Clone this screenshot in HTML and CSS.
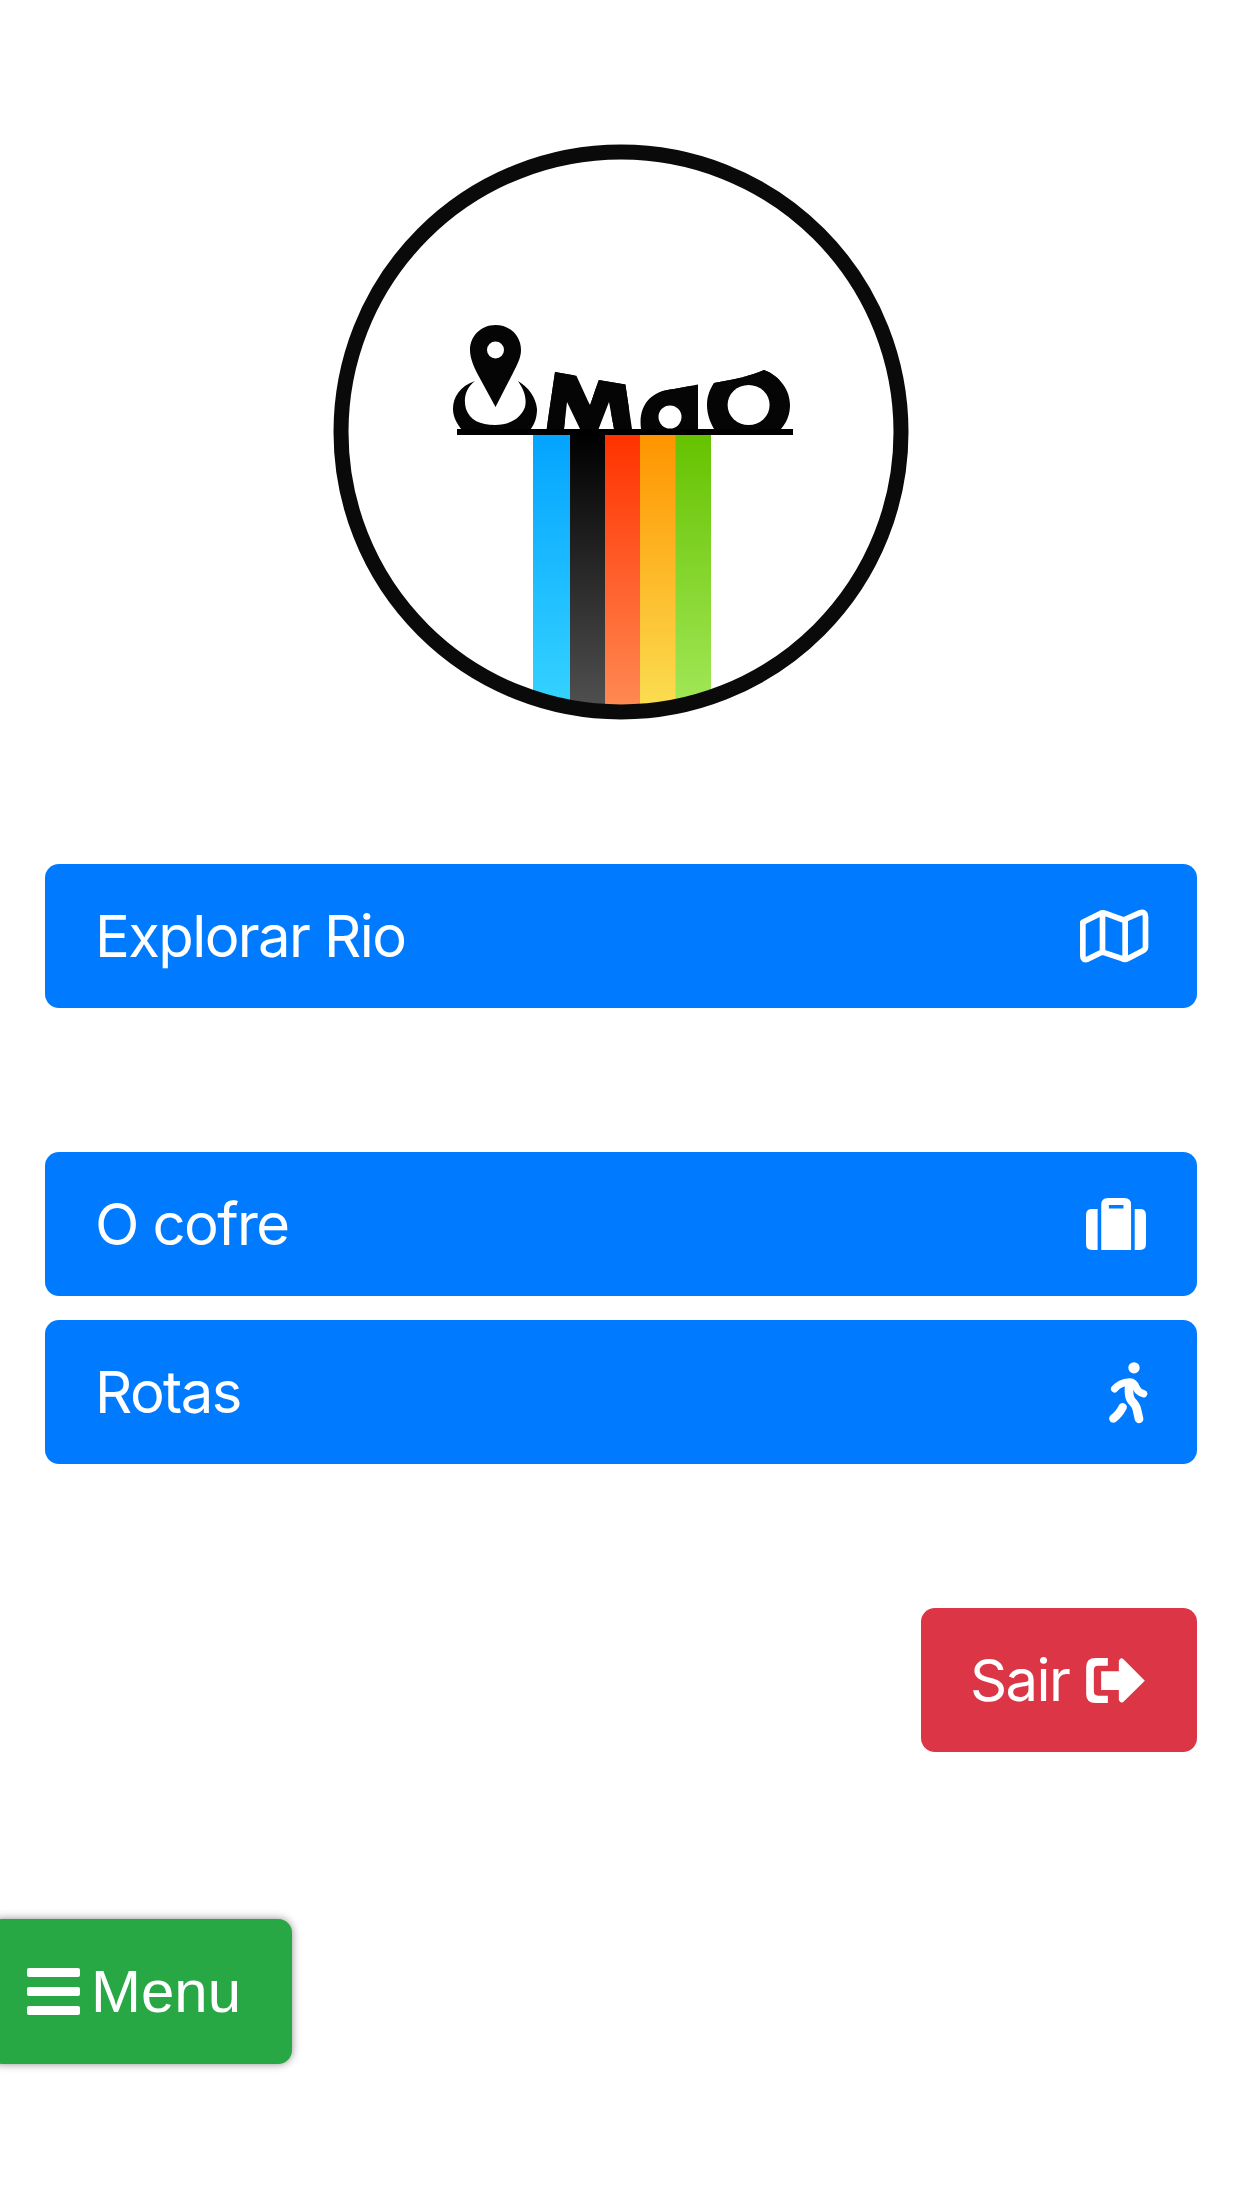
FILE: index.html
```html
<!DOCTYPE html>
<html lang="pt">
<head>
<meta charset="utf-8">
<title>MaO</title>
<link rel="stylesheet" href="styles.css">
</head>
<body>
<main class="page">
  <div class="logo-wrap">
    <svg class="logo" viewBox="321 130 600 600" aria-label="MaO">
      <defs>
        <clipPath id="inner"><circle cx="621" cy="432" r="274"/></clipPath>
        <clipPath id="clipM"><path d="M546.6 429 L555 372 L576.4 375.7 L590 405.5 L598.6 380 L625.4 384.5 L632 429 H614 L609 402 L598.6 429 H580 L567 402 L564 429Z"/></clipPath>
        <clipPath id="clipA"><path d="M641 429 C638 406 650 391 674 389 L698 384.5 V429Z"/></clipPath>
        <clipPath id="clipO"><path d="M714 383 C732 380 750 376 764 370 C780 376 790 390 790 405 C790 414 787 422 781 429 H714 C710 422 707 414 707 405 C707 396 710 389 714 383Z"/></clipPath>
        <linearGradient id="g1" x1="0" y1="0" x2="0" y2="1"><stop offset="0" stop-color="#04a4ff"/><stop offset="1" stop-color="#38d6ff"/></linearGradient>
        <linearGradient id="g2" x1="0" y1="0" x2="0" y2="1"><stop offset="0" stop-color="#000"/><stop offset="1" stop-color="#555"/></linearGradient>
        <linearGradient id="g3" x1="0" y1="0" x2="0" y2="1"><stop offset="0" stop-color="#ff3200"/><stop offset="1" stop-color="#ff8f58"/></linearGradient>
        <linearGradient id="g4" x1="0" y1="0" x2="0" y2="1"><stop offset="0" stop-color="#ff9400"/><stop offset="1" stop-color="#fbe256"/></linearGradient>
        <linearGradient id="g5" x1="0" y1="0" x2="0" y2="1"><stop offset="0" stop-color="#66c200"/><stop offset="1" stop-color="#a6ea5e"/></linearGradient>
      </defs>
      <g clip-path="url(#inner)">
        <rect x="533" y="435" width="37.5" height="290" fill="url(#g1)"/>
        <rect x="570" y="435" width="35.5" height="290" fill="url(#g2)"/>
        <rect x="605" y="435" width="35.5" height="290" fill="url(#g3)"/>
        <rect x="640" y="435" width="36" height="290" fill="url(#g4)"/>
        <rect x="675.5" y="435" width="35.5" height="290" fill="url(#g5)"/>
      </g>
      <circle cx="621" cy="432" r="280" fill="none" stroke="#0a0a0a" stroke-width="15"/>
      <path class="ink" d="M495.5 325 C481 325 470 336 470 350 C470 358 474 367 477 373 L495.5 407 L513 373 C517 365 521 358 521 350 C521 336 510 325 495.5 325Z M495.5 341.5 A8.5 8.5 0 1 1 495.5 358.5 A8.5 8.5 0 1 1 495.5 341.5Z" fill-rule="evenodd"/>
      <path class="ink" d="M475 381 C460 386 453 397 453 409 C453 417 457 424 462 430 H530 C535 424 537 417 537 409 C536 397 528 387 518 381 C524 390 527 398 525 407 C521 418 510 425 495 425 C480 425 470 420 466 409 C463 398 466 388 475 381Z"/>
      <g clip-path="url(#clipM)"><text class="logo-letter" transform="translate(538 432) scale(1.4 1.2)">M</text></g>
      <g clip-path="url(#clipA)"><text class="logo-letter" transform="translate(640 432) scale(1.35 1.2)">a</text></g>
      <circle cx="670" cy="417" r="11.5" fill="#fff"/>
      <g clip-path="url(#clipO)"><text class="logo-letter" transform="translate(706 432) scale(1.35 1.25)">O</text></g>
      <ellipse cx="748.6" cy="405" rx="21" ry="20" fill="#fff"/>
      <rect x="457" y="429" width="336" height="6" fill="#000"/>
    </svg>
  </div>

  <nav class="actions">
    <a class="btn btn-primary btn-split" href="#">
      <span>Explorar Rio</span>
      <svg class="icon icon-map" viewBox="120 85 206 162"><path d="M128 125 L178 100 Q187 95 196 98 L250 118 L300 96 Q316 92 316 108 V198 Q316 206 308 210 L262 234 Q254 238 246 234 L192 216 Q186 214 180 217 L142 236 Q128 240 128 226 Z M187 98 V216 M255 118 V236" fill="none" stroke="#fff" stroke-width="17" stroke-linejoin="round"/></svg>
    </a>
    <div class="spacer"></div>
    <a class="btn btn-primary btn-split" href="#">
      <span>O cofre</span>
      <svg class="icon icon-case" viewBox="137 84 181 157"><path fill="#fff" fill-rule="evenodd" d="M155 117 H172 V241 H155 Q137 241 137 223 V135 Q137 117 155 117Z M284 117 H300 Q318 117 318 135 V223 Q318 241 300 241 H284Z M203 84 H253 Q273 84 273 104 V241 H183 V104 Q183 84 203 84Z M206 105 V116 H250 V105Z"/></svg>
    </a>
    <a class="btn btn-primary btn-split btn-gap" href="#">
      <span>Rotas</span>
      <svg class="icon icon-walk" viewBox="85 62 120 188"><circle cx="163" cy="82" r="17" fill="#fff"/><path d="M105 145 Q120 126 150 124 Q164 124 170 142 Q175 155 192 160" fill="none" stroke="#fff" stroke-width="22" stroke-linecap="round" stroke-linejoin="round"/><path d="M150 128 Q144 165 155 180 Q170 195 172 208 L178 235" fill="none" stroke="#fff" stroke-width="26" stroke-linecap="round" stroke-linejoin="round"/><path d="M101 234 Q118 222 129 200" fill="none" stroke="#fff" stroke-width="25" stroke-linecap="round"/></svg>
    </a>
    <div class="spacer"></div>
    <div class="end">
      <a class="btn btn-danger" href="#">
        <span>Sair</span>
        <svg class="icon icon-exit" viewBox="530 172 176 135"><path fill="#fff" d="M595 172 H558 Q530 172 530 200 V280 Q530 307 558 307 H595 V285 H566 Q553 285 553 272 V208 Q553 195 566 195 H595Z M575 212 H628 V180 Q634 168 642 176 L706 240 L642 303 Q634 310 628 298 V268 H575Z"/></svg>
      </a>
    </div>
  </nav>
</main>

<a class="menu-btn" href="#">
  <span class="bars"><i></i><i></i><i></i></span>
  <span>Menu</span>
</a>
</body>
</html>
```

FILE: styles.css
```css
* { box-sizing: border-box; }
html, body { margin: 0; padding: 0; background: #fff; }
body { width: 1242px; height: 2208px; overflow: hidden; font-family: Inter, "Liberation Sans", sans-serif; position: relative; }
.page { padding: 130px 45px 0; }
.logo-wrap { display: flex; justify-content: center; height: 734px; }
.logo { width: 600px; height: 600px; display: block; }
.ink { fill: #050505; }
.logo-letter { font-family: "DejaVu Sans", sans-serif; font-weight: 700; font-size: 72px; fill: #050505; stroke: #050505; stroke-width: 22px; }
.actions { display: flex; flex-direction: column; }
.btn { display: flex; align-items: center; height: 144px; padding: 0 48px 0 47px; border: 3px solid transparent; border-radius: 14px; color: #fff; text-decoration: none; font-size: 58px; line-height: 90px; letter-spacing: -1.6px; }
.btn-primary { background: #007bff; }
.btn-danger { background: #dc3545; width: 276px; gap: 17px; padding-left: 46px; }
.btn-split { justify-content: space-between; }
.btn-gap { margin-top: 24px; }
.spacer { height: 144px; }
.end { display: flex; justify-content: flex-end; }
.icon { display: block; flex: none; }
.icon-map { width: 69px; height: 54px; margin-right: -3px; }
.icon-case { width: 60px; height: 52px; }
.icon-walk { width: 40px; height: 63px; margin-right: -2px; }
.icon-exit { width: 59px; height: 45px; }
.menu-btn { position: absolute; left: -12px; top: 1919px; width: 304px; height: 145px; padding-left: 39px; display: flex; align-items: center; gap: 11px; background: #28a745; border-radius: 14px; color: #fff; text-decoration: none; font-family: "Liberation Sans", Arial, sans-serif; font-size: 60px; line-height: 90px; box-shadow: 0 0 8px rgba(0,0,0,.45); }
.bars { display: flex; flex-direction: column; gap: 10px; width: 53px; }
.bars i { display: block; height: 9px; background: #fff; border-radius: 2px; }
```
